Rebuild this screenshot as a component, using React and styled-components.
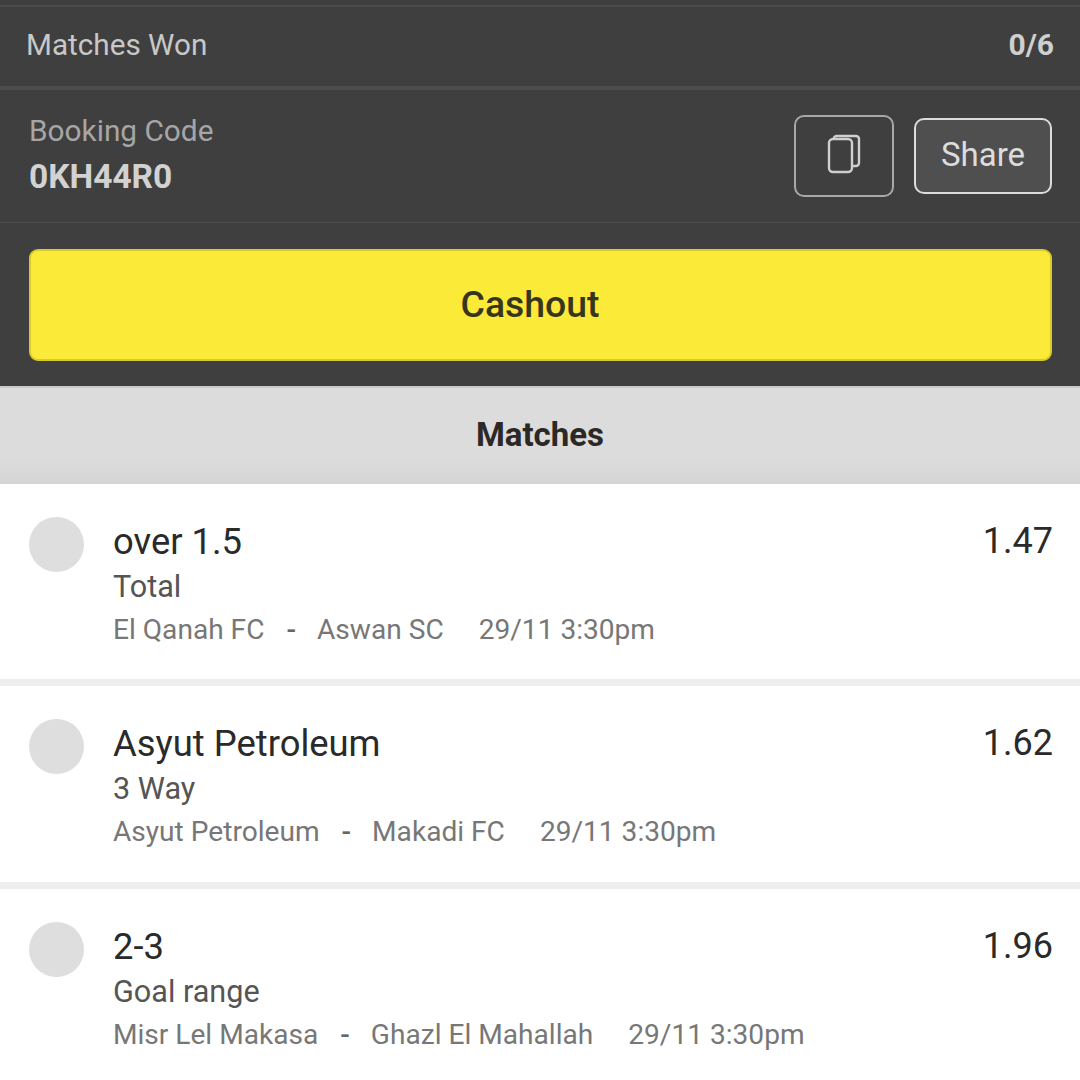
import styled, { createGlobalStyle } from "styled-components";

const GlobalStyle = createGlobalStyle`
  html, body {
    margin: 0;
    padding: 0;
    background: #fff;
    font-family: Roboto, "Liberation Sans", sans-serif;
  }
`;

const Page = styled.div`
  width: 1080px;
  height: 1080px;
  overflow: hidden;
`;

const Dark = styled.section`
  background: #3f3f3f;
  height: 386px;
  padding-top: 5px;
  box-sizing: border-box;
`;

const WonRow = styled.div`
  height: 75px;
  padding: 0 26px 4px 26px;
  border-top: 2px solid #4c4c4c;
  border-bottom: 4px solid #4c4c4c;
  display: flex;
  align-items: center;
  justify-content: space-between;
  font-size: 29.7px;
  color: #c8c8c8;
`;

const WonCount = styled.span`
  font-weight: 700;
  font-size: 30px;
  color: #cfcfcf;
`;

const BookingRow = styled.div`
  height: 132px;
  padding: 0 28px 0 29px;
  border-bottom: 1px solid #4c4c4c;
  display: flex;
  align-items: center;
  justify-content: space-between;
`;

const BookingInfo = styled.div`
  display: flex;
  flex-direction: column;
  gap: 8px;
  margin-bottom: 2px;
`;

const BookingLabel = styled.span`
  font-size: 29.8px;
  line-height: 36px;
  color: #a6a6a6;
`;

const BookingCode = styled.span`
  font-size: 33.5px;
  line-height: 40px;
  font-weight: 700;
  color: #d2d2d2;
`;

const Actions = styled.div`
  display: flex;
  align-items: center;
  gap: 20px;
`;

const CopyButton = styled.button`
  width: 100px;
  height: 82px;
  padding: 0;
  background: transparent;
  border: 2px solid #a8a8a8;
  border-radius: 10px;
  display: flex;
  align-items: center;
  justify-content: center;
  box-sizing: border-box;
`;

const ShareButton = styled.button`
  width: 138px;
  height: 76px;
  padding: 0 0 4px;
  background: #4f4f4f;
  border: 2px solid #dcdcdc;
  border-radius: 10px;
  font-family: inherit;
  font-size: 33px;
  color: #dcdcdc;
  box-sizing: border-box;
`;

const CashoutWrap = styled.div`
  padding: 26px 28px 0 29px;
`;

const CashoutButton = styled.button`
  width: 100%;
  height: 112px;
  padding: 0 21px 2px 0;
  background: #fbeb38;
  border: 2px solid #d9c92a;
  border-radius: 9px;
  font-family: inherit;
  font-size: 37.4px;
  font-weight: 500;
  color: #38351f;
  box-sizing: border-box;
`;

const MatchesHeader = styled.div`
  height: 93px;
  padding-bottom: 3px;
  border-top: 2px solid #c9c9c9;
  background: linear-gradient(#dcdcdc 0%, #dcdcdc 70%, #d5d5d5 100%);
  display: flex;
  align-items: center;
  justify-content: center;
  font-size: 33px;
  font-weight: 700;
  color: #2b2826;
`;

const MatchRow = styled.article`
  height: 202.4px;
  background: #fff;
  padding: 33px 27px 0 29px;
  box-sizing: border-box;
  display: flex;
  align-items: flex-start;
  border-bottom: 7px solid #eeeeee;
  &:last-child {
    border-bottom: 0;
  }
`;

const Dot = styled.span`
  flex: none;
  width: 55px;
  height: 55px;
  border-radius: 50%;
  background: #dedede;
  margin-right: 29px;
`;

const MatchBody = styled.div`
  flex: 1;
  padding-top: 2px;
  display: flex;
  flex-direction: column;
`;

const Pick = styled.div`
  font-size: 36.4px;
  line-height: 45px;
  color: #2a2a2a;
`;

const Market = styled.div`
  font-size: 30.6px;
  line-height: 45px;
  color: #555;
`;

const Teams = styled.div`
  font-size: 28.1px;
  line-height: 42px;
  color: #777;
  white-space: pre;
  display: flex;
`;

const Dash = styled.span`
  margin: 0 21px 0 22px;
  font-weight: 500;
  color: #666;
`;

const Kickoff = styled.span`
  margin-left: 35px;
`;

const Odds = styled.div`
  font-size: 36px;
  line-height: 45px;
  padding-top: 2px;
  color: #2a2a2a;
`;

const SheetsIcon = styled.svg`
  margin-bottom: 4px;
`;

const matches = [
  { pick: "over 1.5", market: "Total", home: "El Qanah FC", away: "Aswan SC", odds: "1.47" },
  { pick: "Asyut Petroleum", market: "3 Way", home: "Asyut Petroleum", away: "Makadi FC", odds: "1.62" },
  { pick: "2-3", market: "Goal range", home: "Misr Lel Makasa", away: "Ghazl El Mahallah", odds: "1.96" },
];

function CopyIcon() {
  return (
    <SheetsIcon width="34" height="40" viewBox="0 0 34 40" fill="none" stroke="#cfcfcf" strokeWidth="2.4">
      <rect x="2" y="5" width="23" height="33" rx="4" />
      <path d="M7 5V4a3 3 0 0 1 3-2h19a3 3 0 0 1 3 3v24a3 3 0 0 1-3 3h-4" />
    </SheetsIcon>
  );
}

export default function App() {
  return (
    <Page>
      <GlobalStyle />
      <Dark>
        <WonRow>
          <span>Matches Won</span>
          <WonCount>0/6</WonCount>
        </WonRow>
        <BookingRow>
          <BookingInfo>
            <BookingLabel>Booking Code</BookingLabel>
            <BookingCode>0KH44R0</BookingCode>
          </BookingInfo>
          <Actions>
            <CopyButton>
              <CopyIcon />
            </CopyButton>
            <ShareButton>Share</ShareButton>
          </Actions>
        </BookingRow>
        <CashoutWrap>
          <CashoutButton>Cashout</CashoutButton>
        </CashoutWrap>
      </Dark>
      <MatchesHeader>Matches</MatchesHeader>
      {matches.map((m) => (
        <MatchRow key={m.pick}>
          <Dot />
          <MatchBody>
            <Pick>{m.pick}</Pick>
            <Market>{m.market}</Market>
            <Teams>
              <span>{m.home}</span>
              <Dash>-</Dash>
              <span>{m.away}</span>
              <Kickoff>29/11 3:30pm</Kickoff>
            </Teams>
          </MatchBody>
          <Odds>{m.odds}</Odds>
        </MatchRow>
      ))}
    </Page>
  );
}
